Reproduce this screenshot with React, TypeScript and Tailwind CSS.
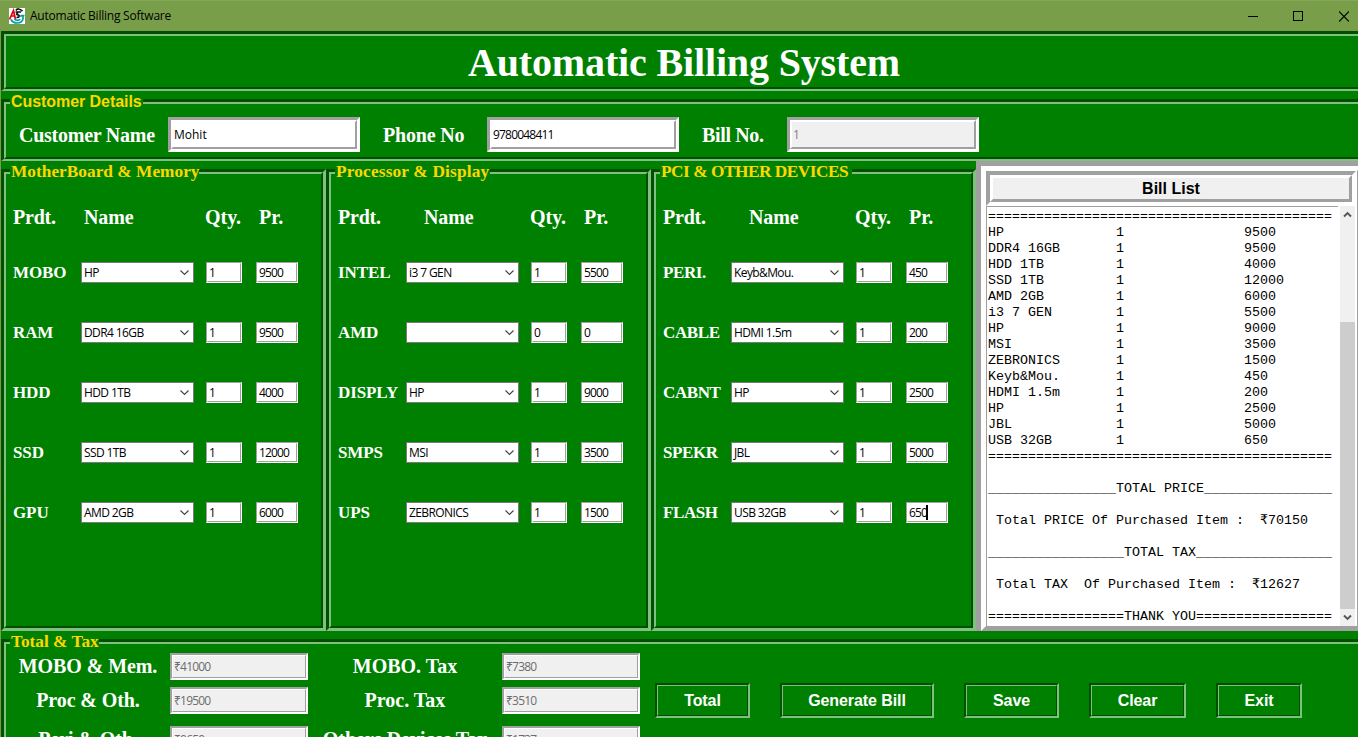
import React from "react";

type Item = [label: string, name: string, qty: string, price: string];

const SERIF = "font-['Liberation_Serif',serif] font-bold";
const SANS = "font-['Liberation_Sans',sans-serif] font-bold";
const UI = "font-['Open_Sans','Noto_Sans',sans-serif] font-normal text-[12px]";

const panels: { title: string; gap: string; nameAt: string; tracking: string; items: Item[] }[] = [
  {
    title: "MotherBoard & Memory",
    gap: "w-[189px]",
    nameAt: "pl-[3px]",
    tracking: "tracking-[0.02px]",
    items: [
      ["MOBO", "HP", "1", "9500"],
      ["RAM", "DDR4 16GB", "1", "9500"],
      ["HDD", "HDD 1TB", "1", "4000"],
      ["SSD", "SSD 1TB", "1", "12000"],
      ["GPU", "AMD 2GB", "1", "6000"],
    ],
  },
  {
    title: "Processor & Display",
    gap: "w-[155px]",
    nameAt: "pl-[18px]",
    tracking: "tracking-[0.17px]",
    items: [
      ["INTEL", "i3 7 GEN", "1", "5500"],
      ["AMD", "", "0", "0"],
      ["DISPLY", "HP", "1", "9000"],
      ["SMPS", "MSI", "1", "3500"],
      ["UPS", "ZEBRONICS", "1", "1500"],
    ],
  },
  {
    title: "PCI & OTHER DEVICES",
    gap: "w-[192px]",
    nameAt: "pl-[18px]",
    tracking: "tracking-[-0.48px]",
    items: [
      ["PERI.", "Keyb&Mou.", "1", "450"],
      ["CABLE", "HDMI 1.5m", "1", "200"],
      ["CABNT", "HP", "1", "2500"],
      ["SPEKR", "JBL", "1", "5000"],
      ["FLASH", "USB 32GB", "1", "650"],
    ],
  },
];

const line = (n: string, q: string, p: string) => n.padEnd(16) + q.padEnd(16) + p;

const bill = [
  "=".repeat(43),
  ...panels
    .flatMap((p) => p.items)
    .filter(([, name]) => name !== "")
    .map(([, name, qty, price]) => line(name, qty, price)),
  "=".repeat(43),
  "",
  "_".repeat(16) + "TOTAL PRICE" + "_".repeat(16),
  "",
  " Total PRICE Of Purchased Item :  ₹70150",
  "",
  "_".repeat(17) + "TOTAL TAX" + "_".repeat(17),
  "",
  " Total TAX  Of Purchased Item :  ₹12627",
  "",
  "=".repeat(17) + "THANK YOU" + "=".repeat(17),
].join("\n");

function Frame({ className, children }: { className: string; children?: React.ReactNode }) {
  return (
    <div
      className={`relative shrink-0 border-t-[3px] border-r-[3px] border-l-[3px] border-t-[#005000] border-r-[#80c080] border-b-[#80c080] border-l-[#005000] ${className}`}
    >
      <div className="h-full border-2 border-t-[#80c080] border-r-[#005000] border-b-[#005000] border-l-[#80c080]">
        {children}
      </div>
    </div>
  );
}

function Legend({ className, children }: { className: string; children: React.ReactNode }) {
  return (
    <div
      className={`absolute left-[6px] h-[20px] whitespace-nowrap bg-[#008000] pl-px leading-[20px] text-[#ffd700] ${className}`}
    >
      {children}
    </div>
  );
}

function BigEntry({ value, disabled }: { value: string; disabled?: boolean }) {
  return (
    <div className="h-[35px] w-[192px] shrink-0 border-[3px] border-t-[#a0a0a0] border-r-white border-b-white border-l-[#a0a0a0]">
      <div
        className={`flex h-full items-center border-2 border-t-white border-r-[#a0a0a0] border-b-[#a0a0a0] border-l-white pl-px ${UI} ${
          disabled ? "bg-[#f0f0f0] text-[#8a7a8a]" : "bg-white text-black"
        } ${value === "Mohit" ? "tracking-[0px]" : "tracking-[-0.8px]"}`}
      >
        {value}
      </div>
    </div>
  );
}

function SumEntry({ value }: { value: string }) {
  return (
    <div className="h-[27px] w-[138px] shrink-0 border-2 border-t-[#a0a0a0] border-r-white border-b-white border-l-[#a0a0a0]">
      <div
        className={`flex h-full items-center border border-t-white border-r-[#a0a0a0] border-b-[#a0a0a0] border-l-white bg-[#f0f0f0] pl-px tracking-[-0.8px] text-[#6d6d6d] ${UI}`}
      >
        {value}
      </div>
    </div>
  );
}

function SmallEntry({ value, className, caret }: { value: string; className: string; caret?: boolean }) {
  return (
    <div className={`h-[21px] shrink-0 border border-t-[#a0a0a0] border-r-white border-b-white border-l-[#a0a0a0] ${className}`}>
      <div
        className={`flex h-full items-center border border-t-white border-r-[#a0a0a0] border-b-[#a0a0a0] border-l-white bg-white pl-px tracking-[-0.85px] text-black ${UI}`}
      >
        {value}
        {caret && <span className="-ml-px h-[15px] w-[2px] bg-black" />}
      </div>
    </div>
  );
}

function Combo({ value }: { value: string }) {
  return (
    <div
      className={`flex h-[21px] w-[113px] shrink-0 items-center justify-between whitespace-nowrap border border-[#7a7a7a] bg-white pl-[2px] pr-[3px] tracking-[-0.6px] text-black ${UI}`}
    >
      <span>{value}</span>
      <svg width="11" height="9" viewBox="0 0 11 9" fill="none" stroke="#444" strokeWidth="1.1">
        <path d="M1.5 2.5 L5.5 6.5 L9.5 2.5" />
      </svg>
    </div>
  );
}

function Action({ label, className }: { label: string; className: string }) {
  return (
    <button
      className={`h-[35px] shrink-0 border-2 border-t-[#005000] border-r-[#80c080] border-b-[#80c080] border-l-[#005000] ${className}`}
    >
      <span
        className={`flex h-full items-center justify-center border border-t-[#80c080] border-r-[#005000] border-b-[#005000] border-l-[#80c080] text-[16px] tracking-[-0.08px] text-white ${SANS}`}
      >
        {label}
      </span>
    </button>
  );
}

function AppIcon() {
  return (
    <svg width="16" height="16" viewBox="0 0 16 16" className="mr-[5px] shrink-0">
      <rect width="16" height="16" fill="#fff" />
      <path d="M0.5 11.5 L4.5 2.5 L6.5 11.5 M1.5 8 H6" stroke="#e00010" strokeWidth="1.7" fill="none" />
      <path d="M7 2.5 C8 .5 10.5 .2 13.5 3.2 M6.5 4 H12 M9 4.5 C7 6 7.5 7 9.5 7 C11 8 10.5 9.5 7.5 9.5" stroke="#111" strokeWidth="1.7" fill="none" />
      <path d="M2 11.5 C4 15.5 12 17 14 11 V8 H10.5 M15.5 7.5 H12 M5.5 11 C7 13 10.5 12.5 11 11" stroke="#00a0a8" strokeWidth="1.7" fill="none" />
    </svg>
  );
}

function TitleBar() {
  return (
    <header className="flex h-[31px] shrink-0 items-center border-t border-[#85a857] bg-[#789e4a] pl-[9px]">
      <AppIcon />
      <span className={`text-black tracking-[-0.23px] ${UI}`}>Automatic Billing Software</span>
      <div className="ml-auto flex items-center gap-[35px] pr-[9px]">
        <svg width="10" height="11" viewBox="0 0 10 11">
          <path d="M0 5.5 H10" stroke="#000" />
        </svg>
        <svg width="10" height="11" viewBox="0 0 10 11" className="mr-px">
          <rect x=".5" y=".5" width="9" height="9" fill="none" stroke="#000" />
        </svg>
        <svg width="10" height="11" viewBox="0 0 10 11">
          <path d="M0 .5 L10 10.5 M10 .5 L0 10.5" stroke="#000" strokeWidth="1.1" />
        </svg>
      </div>
    </header>
  );
}

function ProductPanel({ panel }: { panel: (typeof panels)[number] }) {
  return (
    <Frame className="h-[462px] w-[325px] border-b-[3px]">
      <Legend className={`top-[-10px] text-[17.3px] ${SERIF} ${panel.gap} ${panel.tracking}`}>{panel.title}</Legend>
      <div className={`flex h-[88px] items-center pb-[2px] pl-[7px] text-[20px] text-white ${SERIF}`}>
        <span className="w-[68px] tracking-[-0.2px]">Prdt.</span>
        <span className={`w-[123px] tracking-[-0.1px] ${panel.nameAt}`}>Name</span>
        <span className="w-[55px] pl-px">Qty.</span>
        <span>Pr.</span>
      </div>
      <div className="flex flex-col gap-[39px]">
        {panel.items.map(([label, name, qty, price]) => (
          <div key={label} className="flex h-[21px] items-center pl-[7px]">
            <span
              className={`w-[68px] shrink-0 text-[17px] text-white ${SERIF} ${
                panel.title.startsWith("PCI") ? "tracking-[-0.4px]" : "tracking-[-0.1px]"
              }`}
            >
              {label}
            </span>
            <Combo value={name} />
            <SmallEntry value={qty} className="ml-[12px] w-[36px]" />
            <SmallEntry value={price} className="ml-[14px] w-[42px]" caret={label === "FLASH"} />
          </div>
        ))}
      </div>
    </Frame>
  );
}

function Scrollbar() {
  return (
    <div className="flex w-[15px] flex-col bg-[#f0f0f0]">
      <div className="flex h-[17px] items-center justify-center">
        <svg width="9" height="7" viewBox="0 0 9 7" fill="none" stroke="#555" strokeWidth="1.9">
          <path d="M1 5.5 L4.5 2 L8 5.5" />
        </svg>
      </div>
      <div className="mt-[99px] h-[287px] bg-[#cdcdcd]" />
      <div className="flex h-[17px] items-center justify-center">
        <svg width="9" height="7" viewBox="0 0 9 7" fill="none" stroke="#555" strokeWidth="1.9">
          <path d="M1 1.5 L4.5 5 L8 1.5" />
        </svg>
      </div>
    </div>
  );
}

function BillArea() {
  return (
    <div className="h-[470px] shrink-0 overflow-hidden">
      <div className="h-[475px] w-[391px] border-[5px] border-t-[#a0a0a0] border-r-white border-b-white border-l-[#a0a0a0]">
        <div className="flex h-full flex-col border-[5px] border-t-white border-r-[#a0a0a0] border-b-[#a0a0a0] border-l-white bg-white">
          <div className="h-[35px] w-[370px] shrink-0 border-4 border-t-[#a0a0a0] border-r-white border-b-white border-l-[#a0a0a0]">
            <div
              className={`flex h-full items-center justify-center border-[3px] border-t-white border-r-[#a0a0a0] border-b-[#a0a0a0] border-l-white bg-[#f0f0f0] text-[16px] text-black ${SANS}`}
            >
              Bill List
            </div>
          </div>
          <div className="flex min-h-0 grow">
            <pre className="mr-[2px] w-[352px] overflow-hidden border-t border-l border-[#a0a0a0] pl-px pt-[2px] font-['Liberation_Mono',monospace] text-[13.333px] leading-[16px] text-black">
              {bill}
            </pre>
            <Scrollbar />
          </div>
        </div>
      </div>
    </div>
  );
}

const sums = [
  ["MOBO & Mem.", "₹41000", "MOBO. Tax", "₹7380", "h-[34px]"],
  ["Proc & Oth.", "₹19500", "Proc. Tax", "₹3510", "h-[39px]"],
  ["Peri & Oth.", "₹9650", "Others Devices Tax", "₹1737", "h-[34px]"],
];

export default function App() {
  return (
    <div className="flex h-[737px] w-[1358px] flex-col overflow-hidden bg-[#789e4a]">
      <TitleBar />
      <main className="ml-px flex h-[706px] flex-col overflow-hidden bg-[#008000]">
        <Frame className="h-[60px] w-[1366px] border-b-2">
          <h1 className={`pt-[4px] text-center text-[40px] leading-[46px] tracking-[-0.15px] text-white ${SERIF}`}>
            Automatic Billing System
          </h1>
        </Frame>

        <Frame className="mt-[8px] h-[62px] w-[1366px] border-b-2">
          <Legend className={`top-[-10px] w-[133px] text-[16px] tracking-[-0.06px] ${SANS}`}>Customer Details</Legend>
          <div className={`flex h-full items-center pl-[13px] pt-[8px] text-[20px] text-white ${SERIF}`}>
            <span className="w-[149px] tracking-[-0.25px]">Customer Name</span>
            <BigEntry value="Mohit" />
            <span className="w-[127px] pl-[23px] tracking-[-0.2px]">Phone No</span>
            <BigEntry value="9780048411" />
            <span className="w-[108px] pl-[23px] tracking-[-0.35px]">Bill No.</span>
            <BigEntry value="1" disabled />
          </div>
        </Frame>

        <div className="flex h-[470px] shrink-0 items-end">
          {panels.map((p) => (
            <ProductPanel key={p.title} panel={p} />
          ))}
          <BillArea />
        </div>

        <Frame className="mt-[8px] h-[140px] w-[1366px] border-b-[3px]">
          <Legend className={`top-[-10px] w-[89px] text-[17.3px] ${SERIF}`}>Total &amp; Tax</Legend>
          <div className="flex">
            <div className="flex flex-col pt-[9px]">
              {sums.map(([a, av, b, bv, h]) => (
                <div key={a} className={`flex items-start text-[20px] leading-[27px] text-white ${SERIF} ${h}`}>
                  <span className="w-[164px] text-center tracking-[-0.1px]">{a}</span>
                  <SumEntry value={av} />
                  <span className="w-[194px] text-center">{b}</span>
                  <SumEntry value={bv} />
                </div>
              ))}
            </div>
            <div className="ml-[15px] flex gap-[30px] pt-[39px]">
              <Action label="Total" className="w-[95px]" />
              <Action label="Generate Bill" className="w-[154px]" />
              <Action label="Save" className="w-[95px]" />
              <Action label="Clear" className="w-[97px]" />
              <Action label="Exit" className="w-[86px]" />
            </div>
          </div>
        </Frame>
      </main>
    </div>
  );
}
